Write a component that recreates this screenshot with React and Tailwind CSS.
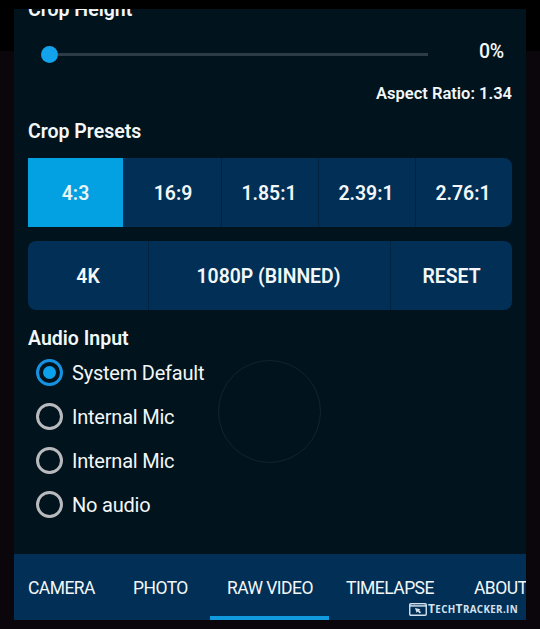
const presets = [
  { label: "4:3", cls: "w-[95px] bg-[#03a0e2] text-[#e9f6f4]" },
  { label: "16:9", cls: "w-[98px] bg-[#012f56] pl-[2px]" },
  { label: "1.85:1", cls: "w-[97px] bg-[#012f56] border-l border-[#012443] pr-[2px]" },
  { label: "2.39:1", cls: "w-[97px] bg-[#012f56] border-l border-[#012443] pr-[2px]" },
  { label: "2.76:1", cls: "w-[97px] bg-[#012f56] border-l border-[#012443] pr-[2px]" },
];

const modes = [
  { label: "4K", cls: "w-[120px]" },
  { label: "1080P (BINNED)", cls: "w-[242px] border-l border-[#012443] pr-[2px]" },
  { label: "RESET", cls: "w-[122px] border-l border-[#012443]" },
];

const inputs = ["System Default", "Internal Mic", "Internal Mic", "No audio"];

const tabs = [
  { label: "CAMERA", cls: "w-[105px]" },
  { label: "PHOTO", cls: "w-[94px]" },
  { label: "RAW VIDEO", cls: "w-[119px]" },
  { label: "TIMELAPSE", cls: "w-[128px]" },
  { label: "ABOUT", cls: "w-[52px]" },
];

function Radio({ checked }) {
  return (
    <span
      className={
        checked
          ? "flex size-[27px] items-center justify-center rounded-full border-[3px] border-[#1593e2]"
          : "size-[27px] rounded-full border-[3px] border-[#b9babd]"
      }
    >
      {checked && <span className="size-[13px] rounded-full bg-[#0ca1ec]" />}
    </span>
  );
}

function Watermark() {
  return (
    <div className="absolute left-[395px] top-[48px] flex h-[14px] items-center gap-px text-[#d5e2ee]">
      <svg width="18" height="13" viewBox="0 0 18 13" fill="none" stroke="currentColor">
        <rect x="0.75" y="0.75" width="16.5" height="11.5" rx="1" strokeWidth="1.4" />
        <path d="M1 2.9h16" strokeWidth="1.5" />
        <path d="M3 1.6h1.5M6 1.6h9" stroke="#416384" strokeWidth="0.8" />
        <path d="M6 5l5.5 1.2-1.3 1.1 1.8 2-1.3 1.2-1.8-2-1.4 1.3z" fill="currentColor" stroke="none" />
      </svg>
      <span className="whitespace-nowrap pt-px font-['Open_Sans','Lato',sans-serif] text-[12px] font-bold leading-[14px] tracking-[0.35px]">
        T<span className="text-[9.8px]">ECH</span>T<span className="text-[9.8px]">RACKER.IN</span>
      </span>
    </div>
  );
}

export default function App() {
  return (
    <div className="h-[629px] w-[540px] overflow-hidden bg-[linear-gradient(#000_0_51px,#0a060c_51px)] px-[14px] pt-[9px] font-['Roboto','Noto_Sans',sans-serif] text-[#f3f7f8]">
      <main className="relative flex h-[611px] flex-col overflow-hidden bg-[#01131c]">
        <section className="flex h-[545px] flex-col px-[14px]">
          <h2 className="-mt-[11px] h-[24px] whitespace-nowrap text-[19.5px] font-semibold leading-[24px]">Crop Height</h2>
          <div className="mt-[12px] flex h-[40px] items-center pl-[13px]">
            <span className="size-[17px] rounded-full bg-[#12a3ec]" />
            <span className="h-[3px] w-[370px] bg-[#2c3b45]" />
            <span className="-mt-[4px] ml-auto mr-[8px] text-[19.5px] font-medium leading-[24px] tracking-[-0.2px]">0%</span>
          </div>
          <p className="mt-[8px] h-[24px] text-right text-[16.5px] font-semibold leading-[24px]">Aspect Ratio: 1.34</p>
          <h2 className="mt-[14px] h-[24px] text-[19.5px] font-semibold leading-[24px]">Crop Presets</h2>
          <div className="mt-[14px] flex h-[69px] overflow-hidden rounded-r-[8px] text-[19.4px] font-semibold">
            {presets.map((p) => (
              <button key={p.label} className={`flex items-center justify-center pt-[2px] ${p.cls}`}>
                {p.label}
              </button>
            ))}
          </div>
          <div className="mt-[14px] flex h-[69px] overflow-hidden rounded-[8px] bg-[#012f56] text-[19.4px] font-semibold">
            {modes.map((m) => (
              <button key={m.label} className={`flex items-center justify-center whitespace-nowrap pt-[2px] ${m.cls}`}>
                {m.label}
              </button>
            ))}
          </div>
          <h2 className="mt-[17px] h-[24px] text-[19.5px] font-semibold leading-[24px]">Audio Input</h2>
          <div className="-mt-px pl-[8px]">
            {inputs.map((label, i) => (
              <label key={i} className="flex h-[44px] items-center gap-[9px] whitespace-nowrap text-[20px] tracking-[-0.22px]">
                <Radio checked={i === 0} />
                <span className="pt-[2px]">{label}</span>
              </label>
            ))}
          </div>
        </section>
        <div className="absolute left-[204px] top-[351px] size-[103px] rounded-full border border-[#13242c]" />
        <nav className="relative h-[66px] bg-[#012f56]">
          <div className="flex h-[66px] items-center whitespace-nowrap pl-[14px] pt-[2px] text-[17.5px] tracking-[-0.55px]">
            {tabs.map((t) => (
              <span key={t.label} className={`shrink-0 ${t.cls}`}>{t.label}</span>
            ))}
          </div>
          <span className="absolute bottom-0 left-[196px] h-[4px] w-[119px] bg-[#129ade]" />
          <Watermark />
        </nav>
      </main>
    </div>
  );
}
